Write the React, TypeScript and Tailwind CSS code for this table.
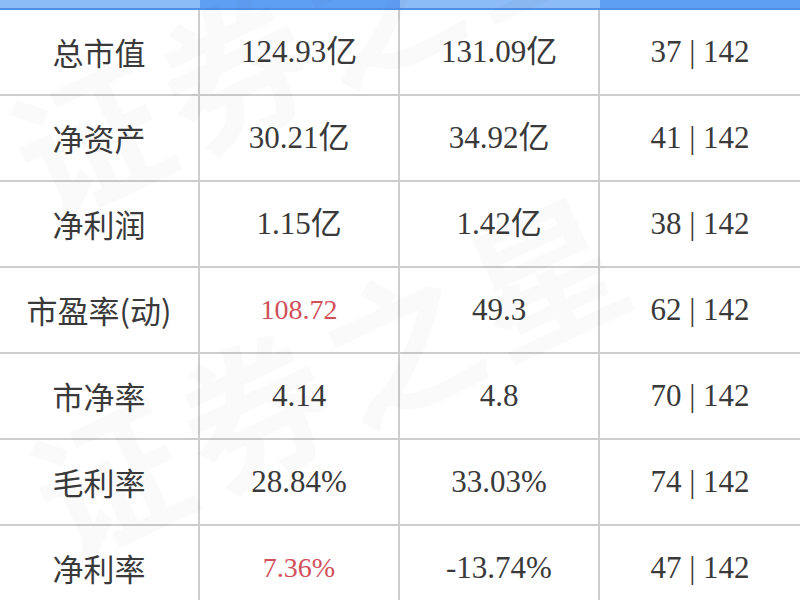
const rows: { label: string; a: string; b: string; rank: string; aRed?: boolean }[] = [
  { label: "总市值", a: "124.93亿", b: "131.09亿", rank: "37 | 142" },
  { label: "净资产", a: "30.21亿", b: "34.92亿", rank: "41 | 142" },
  { label: "净利润", a: "1.15亿", b: "1.42亿", rank: "38 | 142" },
  { label: "市盈率(动)", a: "108.72", b: "49.3", rank: "62 | 142", aRed: true },
  { label: "市净率", a: "4.14", b: "4.8", rank: "70 | 142" },
  { label: "毛利率", a: "28.84%", b: "33.03%", rank: "74 | 142" },
  { label: "净利率", a: "7.36%", b: "-13.74%", rank: "47 | 142", aRed: true },
];

const serif = "font-['Liberation_Serif','Noto_Sans_CJK_SC',serif]";
const sans = "font-['Noto_Sans_CJK_SC','Noto_Sans',sans-serif]";

export default function App() {
  return (
    <div className="relative w-[800px] h-[600px] overflow-hidden bg-white">
      {/* header strip */}
      <div className="grid grid-cols-4 h-[10px] border-b-2 border-[#4f8fe6]">
        <div className="bg-[#8cbcf6]" />
        <div className="bg-[#5e9ff3]" />
        <div className="bg-[#8cbcf6]" />
        <div className="bg-[#5e9ff3]" />
      </div>

      <div className="flex flex-col">
        {rows.map((r) => (
          <div
            key={r.label}
            className="grid grid-cols-4 h-[86px] border-b-2 border-[#cdcdcd] text-[#3a3a3a]"
          >
            <div className={`flex items-center justify-center border-r-2 border-[#cdcdcd] text-[31px] ${sans}`}>
              {r.label}
            </div>
            <div
              className={`flex items-center justify-center border-r-2 border-[#cdcdcd] ${serif} ${
                r.aRed ? "text-[#d0505a] text-[28px]" : "text-[31px]"
              }`}
            >
              {r.a}
            </div>
            <div className={`flex items-center justify-center border-r-2 border-[#cdcdcd] text-[31px] ${serif}`}>
              {r.b}
            </div>
            <div className={`flex items-center justify-center text-[31px] ${serif}`}>
              {r.rank}
            </div>
          </div>
        ))}
      </div>

      {/* watermark, drawn through css content so it stays out of the table text */}
      <div
        aria-hidden
        className={`pointer-events-none absolute left-[20px] top-[90px] -rotate-[25deg] origin-left text-[150px] leading-none tracking-[10px] text-black/[0.018] ${sans} font-bold whitespace-nowrap before:content-['证券之星']`}
      />
      <div
        aria-hidden
        className={`pointer-events-none absolute left-[40px] top-[430px] -rotate-[25deg] origin-left text-[150px] leading-none tracking-[10px] text-black/[0.018] ${sans} font-bold whitespace-nowrap before:content-['证券之星']`}
      />
    </div>
  );
}
